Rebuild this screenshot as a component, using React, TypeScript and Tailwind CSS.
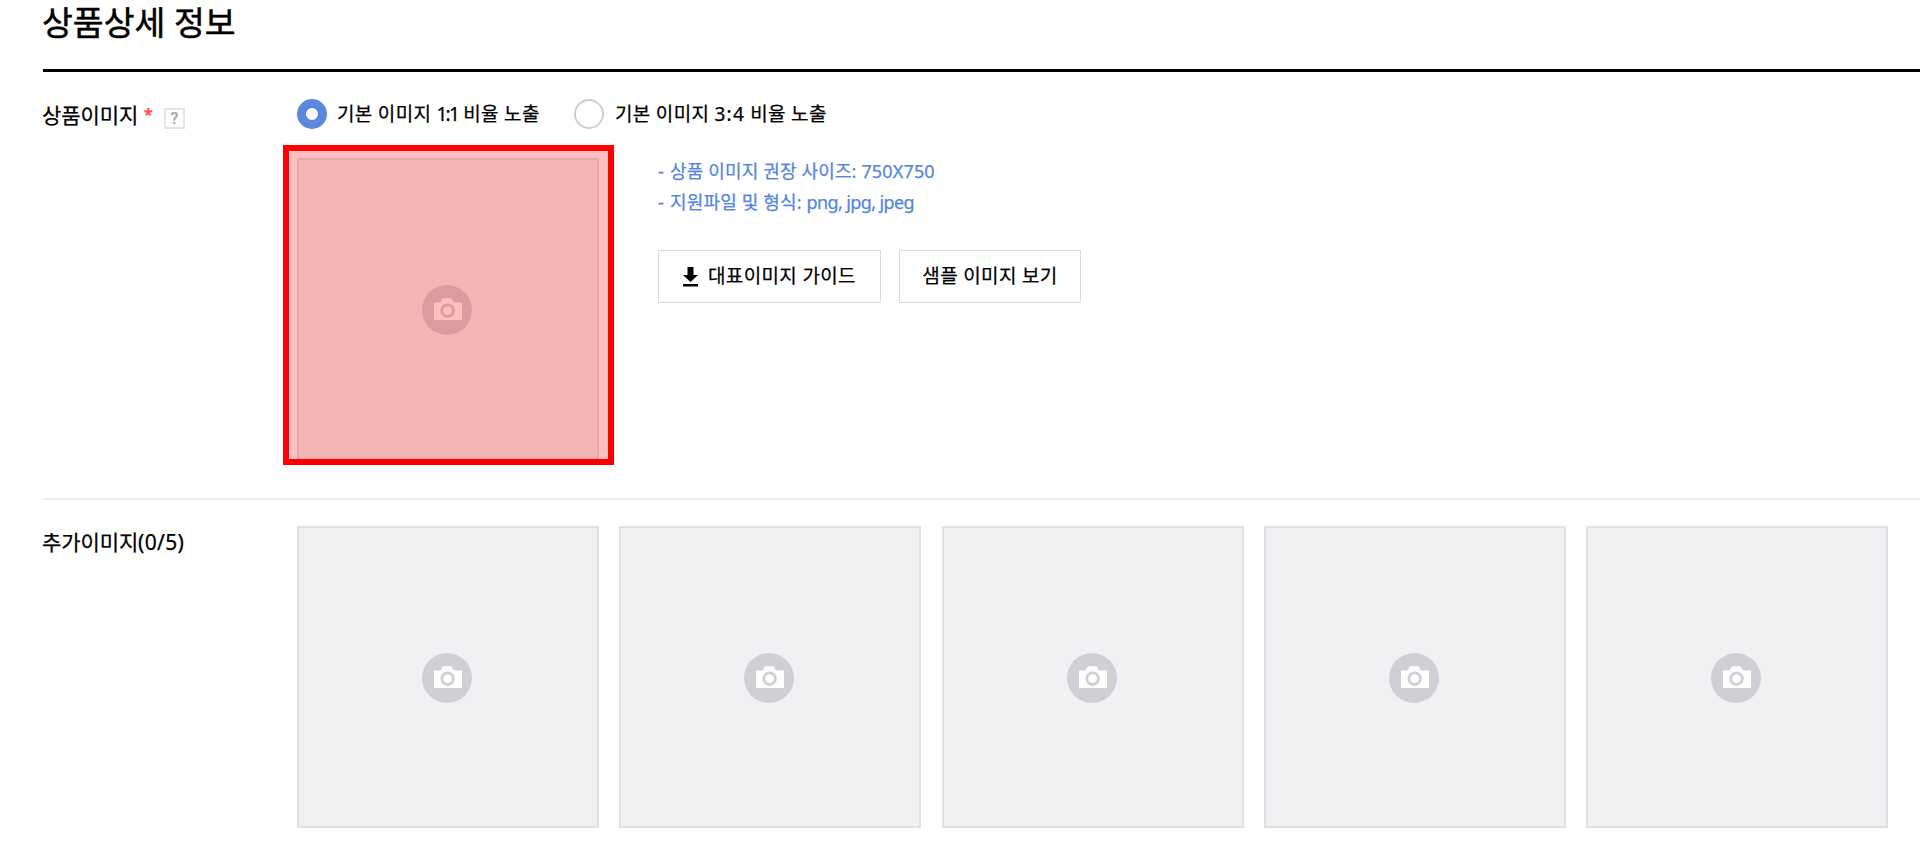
import { clsx } from "clsx";
import type { ReactNode } from "react";

function CameraIcon({ className }: { className?: string }) {
  return (
    <svg
      viewBox="0 0 50 50"
      className={clsx("h-[50px] w-[50px]", className)}
      aria-hidden="true"
    >
      <circle cx="25" cy="25" r="25" fill="#cfd0d6" />
      <path d="M12 17.5h6.5l2.5-4.3h8.5l2.5 4.3H40V35H12z" fill="#fff" />
      <circle cx="25.6" cy="25.7" r="5.8" fill="#fff" stroke="#cfd0d6" strokeWidth="2.8" />
    </svg>
  );
}

function ImageSlot() {
  return (
    <button
      type="button"
      aria-label="이미지 등록"
      className="flex h-[302px] w-[302px] shrink-0 items-center justify-center border-2 border-[#dfe0e4] bg-[#f0f1f3] pr-[2px] pt-[2px]"
    >
      <CameraIcon />
    </button>
  );
}

type RatioOptionProps = {
  children: ReactNode;
  checked?: boolean;
};

function RatioOption({ children, checked }: RatioOptionProps) {
  return (
    <label className="flex items-center gap-[10px]">
      <span
        className={clsx(
          "h-[30px] w-[30px] shrink-0 rounded-full bg-white",
          checked ? "border-[9px] border-[#5b87dd]" : "border-2 border-[#cccddd]"
        )}
      />
      <span className="whitespace-nowrap text-[19px] leading-[30px] tracking-[0.32px]">
        {children}
      </span>
    </label>
  );
}

const EXTRA_SLOTS = [1, 2, 3, 4, 5];

export default function App() {
  return (
    <main className="h-[848px] w-full overflow-hidden bg-white pl-[43px] font-['Noto_Sans','Noto_Sans_CJK_KR',sans-serif] text-black [-webkit-text-stroke:0.25px_currentColor]">
      <h1 className="-ml-px h-[69px] whitespace-nowrap pt-px text-[33.5px] leading-[43px] [-webkit-text-stroke:0.5px_currentColor]">
        상품상세 정보
      </h1>

      <section className="flex h-[431px] border-b-2 border-t-3 border-b-[#ededf1] border-t-black">
        <div className="flex w-[254px] shrink-0 pt-[28px]">
          <span className="-ml-px text-[21px] leading-[30px] tracking-[-0.1px]">상품이미지</span>
          <span className="ml-[6px] text-[16px] font-bold leading-[28px] text-[#ff5050]">*</span>
          <span className="ml-[11px] mt-[8px] flex h-[21px] w-[21px] items-center justify-center border-2 border-[#e4e4e4] font-['Roboto',sans-serif] text-[16px] font-medium text-[#aaa]">
            ?
          </span>
        </div>

        <div>
          <div className="flex h-[57px] gap-[35px] pt-[27px]">
            <div className="w-[242px]">
              <RatioOption checked>
                기본 이미지 <span className="tracking-[-1.8px]">1:1</span> 비율 노출
              </RatioOption>
            </div>
            <RatioOption>
              <span className="ml-px">기본 이미지 </span>
              <span className="tracking-[1.2px]">3:4</span> 비율 노출
            </RatioOption>
          </div>

          <div className="mt-[29px] flex">
            <div className="relative">
              <ImageSlot />
              <div className="absolute -left-[14px] -top-[13px] h-[320px] w-[331px] border-6 border-[#f00] bg-[#ff0000]/25 bg-clip-padding" />
            </div>

            <div className="ml-[59px]">
              <ul className="-mt-[2px] whitespace-nowrap text-[18px] leading-[31px] tracking-[0.15px] text-[#5585dd]">
                <li>
                  <span className="tracking-[1.4px]">-</span> 상품 이미지 권장 사이즈: 750X750
                </li>
                <li>
                  <span className="tracking-[1.4px]">-</span> 지원파일 및 형식:{" "}
                  <span className="tracking-[-0.6px]">png, jpg, jpeg</span>
                </li>
              </ul>
              <div className="mt-[32px] flex gap-[18px]">
                <button
                  type="button"
                  className="flex h-[53px] w-[223px] items-center whitespace-nowrap border border-[#d9dae2] pl-[24px] text-[19px] tracking-[0.35px]"
                >
                  <svg viewBox="0 0 15 20" className="mr-[10px] h-5 w-[15px]" aria-hidden="true">
                    <path d="M4.5 0h6v8H15l-7.5 7L0 8h4.5zM0 17h15v2.5H0z" />
                  </svg>
                  <span className="-mt-px">대표이미지 가이드</span>
                </button>
                <button
                  type="button"
                  className="h-[53px] w-[182px] whitespace-nowrap border border-[#d9dae2] pb-px text-[19px] tracking-[0.35px]"
                >
                  샘플 이미지 보기
                </button>
              </div>
            </div>
          </div>
        </div>
      </section>

      <section className="flex pt-[26px]">
        <div className="w-[254px] shrink-0 text-[21px] leading-[32px] tracking-[-0.1px]">
          <span className="-ml-px">추가이미지</span>
          <span className="tracking-[0.3px]">(0/5)</span>
        </div>
        <div className="flex gap-[20.25px]">
          {EXTRA_SLOTS.map((slot) => (
            <ImageSlot key={slot} />
          ))}
        </div>
      </section>
    </main>
  );
}
